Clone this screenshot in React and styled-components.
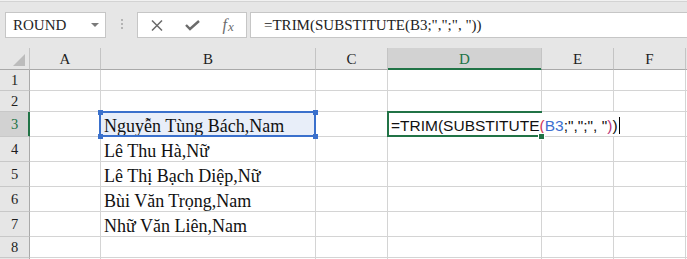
import styled, { createGlobalStyle } from "styled-components";

const GlobalStyle = createGlobalStyle`
  html, body {
    margin: 0;
    padding: 0;
    background: #fff;
    overflow: hidden;
  }
  body {
    font-family: "Liberation Serif", "Times New Roman", serif;
  }
`;

const GREEN = "#217346";
const BLUE = "#3a70cc";

const COLS = [
  { key: "A", width: 71 },
  { key: "B", width: 215 },
  { key: "C", width: 72 },
  { key: "D", width: 154, active: true },
  { key: "E", width: 72 },
  { key: "F", width: 72 },
  { key: "G" },
];

// row 9 only peeks in at the bottom edge, its number is out of view
const ROWS = [
  { n: 1, h: 21 },
  { n: 2, h: 21 },
  { n: 3, h: 25, active: true, b: "Nguyễn Tùng Bách,Nam" },
  { n: 4, h: 25, b: "Lê Thu Hà,Nữ" },
  { n: 5, h: 25, b: "Lê Thị Bạch Diệp,Nữ" },
  { n: 6, h: 25, b: "Bùi Văn Trọng,Nam" },
  { n: 7, h: 25, b: "Nhữ Văn Liên,Nam" },
  { n: 8, h: 21 },
  { n: 9, h: 21, hidden: true },
];

const FORMULA = '=TRIM(SUBSTITUTE(B3;",";", "))';

const App = () => {
  const colTemplate =
    "30px " + COLS.map((c) => (c.width ? c.width + "px" : "1fr")).join(" ");
  const rowTemplate = "22px " + ROWS.map((r) => r.h + "px").join(" ");

  return (
    <>
      <GlobalStyle />
      <Window>
        <Toolbar>
          <NameBox>
            <span>ROUND</span>
            <svg width="8" height="4" viewBox="0 0 8 4">
              <path d="M0 0 L8 0 L4 4 Z" fill="#7a7a7a" />
            </svg>
          </NameBox>
          <Grip />
          <FnButtons>
            <FnButton>
              <svg width="12" height="11" viewBox="0 0 12 11">
                <path
                  d="M1 0.5 L11 10.5 M11 0.5 L1 10.5"
                  stroke="#6b6b6b"
                  strokeWidth="1.5"
                  fill="none"
                />
              </svg>
            </FnButton>
            <FnButton>
              <svg width="15" height="11" viewBox="0 0 15 11">
                <path
                  d="M1 5 L5 9 L14 1"
                  stroke="#6b6b6b"
                  strokeWidth="2.4"
                  fill="none"
                />
              </svg>
            </FnButton>
            <FnButton>
              <Fx>
                f<small>x</small>
              </Fx>
            </FnButton>
          </FnButtons>
          <FormulaInput>{FORMULA}</FormulaInput>
        </Toolbar>

        <Sheet $cols={colTemplate} $rows={rowTemplate}>
          <Corner>
            <svg width="12" height="12" viewBox="0 0 12 12">
              <path d="M12 0 L12 12 L0 12 Z" fill="#bcbcbc" />
            </svg>
          </Corner>
          {COLS.map((c) => (
            <ColHead key={c.key} $active={c.active}>
              {c.key !== "G" ? c.key : ""}
            </ColHead>
          ))}

          {ROWS.map((r) => (
            <Row key={r.n} r={r} />
          ))}
        </Sheet>
      </Window>
    </>
  );
};

const Row = ({ r }) => (
  <>
    <RowHead $active={r.active}>{r.hidden ? "" : r.n}</RowHead>
    {COLS.map((c) => {
      if (c.key === "B" && r.n === 3) {
        return (
          <Cell key={c.key} $selected>
            {r.b}
            <Selection>
              <Handle $top $left />
              <Handle $top />
              <Handle $left />
              <Handle />
            </Selection>
          </Cell>
        );
      }
      if (c.key === "D" && r.n === 3) {
        return (
          <Cell key={c.key}>
            <Editor>
              =TRIM(SUBSTITUTE<Tok $c="#d2365a">(</Tok>
              <Tok $c="#3c6fd0">B3</Tok>
              {';",";", "'}
              <Tok $c="#b8347a">)</Tok>)<Cursor />
            </Editor>
            <EditFrame>
              <FillHandle />
            </EditFrame>
          </Cell>
        );
      }
      return <Cell key={c.key}>{c.key === "B" ? r.b : null}</Cell>;
    })}
  </>
);

export default App;

const Window = styled.div`
  width: 687px;
  height: 259px;
  overflow: hidden;
  background: #fff;
`;

const Toolbar = styled.div`
  display: flex;
  align-items: flex-start;
  height: 48px;
  box-sizing: border-box;
  padding: 11px 0 0 5px;
  background: #e6e6e6;
  border-top: 1px solid #f1f1f1;
  box-shadow: inset 0 1px 0 #d3d3d3;
`;

const NameBox = styled.div`
  display: flex;
  align-items: center;
  justify-content: space-between;
  width: 101px;
  height: 26px;
  box-sizing: border-box;
  padding: 0 6px 0 7px;
  background: #fff;
  border: 1px solid #c6c6c6;
  font-size: 15px;
  color: #262626;
`;

const Grip = styled.div`
  width: 2px;
  height: 10px;
  margin: 7px 14px 0 15px;
  background: repeating-linear-gradient(
    to bottom,
    #b4b4b4 0 2px,
    transparent 2px 4px
  );
`;

const FnButtons = styled.div`
  display: flex;
  width: 110px;
  height: 26px;
  box-sizing: border-box;
  padding-left: 1px;
  background: #fff;
  border: 1px solid #c6c6c6;
`;

const FnButton = styled.div`
  display: flex;
  align-items: center;
  justify-content: center;
  width: 36px;
  height: 100%;
`;

const Fx = styled.span`
  font-family: "Liberation Serif", serif;
  font-style: italic;
  font-size: 16px;
  color: #6b6b6b;
  small {
    font-size: 13px;
    position: relative;
    top: 1px;
    margin-left: 1px;
  }
`;

const FormulaInput = styled.div`
  flex: 1;
  height: 26px;
  box-sizing: border-box;
  margin: 0 -4px 0 3px;
  padding-left: 13px;
  display: flex;
  align-items: center;
  background: #fff;
  border: 1px solid #c6c6c6;
  font-size: 15px;
  color: #222;
  white-space: nowrap;
`;

const Sheet = styled.div`
  display: grid;
  grid-template-columns: ${(p) => p.$cols};
  grid-template-rows: ${(p) => p.$rows};
`;

const HeadBase = styled.div`
  display: flex;
  align-items: center;
  justify-content: center;
  box-sizing: border-box;
  background: #e6e6e6;
  color: #1e1e1e;
  font-family: "Liberation Serif", "Times New Roman", serif;
`;

const Corner = styled(HeadBase)`
  justify-content: flex-end;
  align-items: flex-end;
  padding: 0 4px 3px 0;
  border-right: 1px solid #c4c4c4;
  border-bottom: 1px solid #a9a9a9;
`;

const ColHead = styled(HeadBase)`
  font-size: 15px;
  padding-top: 2px;
  border-right: 1px solid #c4c4c4;
  border-bottom: 1px solid ${(p) => (p.$active ? GREEN : "#a9a9a9")};
  ${(p) =>
    p.$active &&
    `
    background: #d2d2d2;
    color: ${GREEN};
    box-shadow: inset 0 -1px 0 ${GREEN};
  `}
`;

const RowHead = styled(HeadBase)`
  font-size: 14.5px;
  border-right: 1px solid ${(p) => (p.$active ? GREEN : "#a9a9a9")};
  border-bottom: 1px solid #c8c8c8;
  ${(p) =>
    p.$active &&
    `
    background: #d2d2d2;
    color: ${GREEN};
    box-shadow: inset -1px 0 0 ${GREEN};
  `}
`;

const Cell = styled.div`
  position: relative;
  display: flex;
  align-items: flex-end;
  box-sizing: border-box;
  padding-left: 3px;
  border-right: 1px solid #d4d4d4;
  border-bottom: 1px solid #d4d4d4;
  background: ${(p) => (p.$selected ? "#e8eef9" : "#fff")};
  font-family: "Liberation Serif", "Times New Roman", serif;
  font-size: 18px;
  line-height: 20px;
  color: #111;
  white-space: nowrap;
`;

const Selection = styled.div`
  position: absolute;
  left: -2px;
  right: -1px;
  top: -1px;
  bottom: -1px;
  border: 2px solid ${BLUE};
  z-index: 3;
`;

const Handle = styled.div`
  position: absolute;
  width: 5px;
  height: 5px;
  background: ${BLUE};
  ${(p) => (p.$top ? "top: -3.5px;" : "bottom: -3.5px;")}
  ${(p) => (p.$left ? "left: -3.5px;" : "right: -3.5px;")}
`;

const Editor = styled.div`
  position: absolute;
  left: 0;
  top: 0;
  bottom: 0;
  width: 236px;
  z-index: 2;
  display: flex;
  align-items: flex-end;
  padding-left: 3px;
  box-sizing: border-box;
  background: #fff;
  font-family: "Liberation Sans", Arial, sans-serif;
  font-size: 15.5px;
  line-height: 20px;
  color: #111;
  white-space: pre;
`;

const Tok = styled.span`
  color: ${(p) => p.$c};
`;

const Cursor = styled.span`
  display: inline-block;
  width: 1px;
  height: 17px;
  margin: 0 0 2px 1px;
  background: #000;
`;

const EditFrame = styled.div`
  position: absolute;
  left: -1px;
  top: -1px;
  bottom: -1px;
  width: 155px;
  box-sizing: border-box;
  border: 2px solid ${GREEN};
  border-right: none;
  z-index: 3;
`;

const FillHandle = styled.div`
  position: absolute;
  right: -2px;
  bottom: -4px;
  width: 5px;
  height: 5px;
  background: ${GREEN};
  outline: 1px solid #fff;
`;
